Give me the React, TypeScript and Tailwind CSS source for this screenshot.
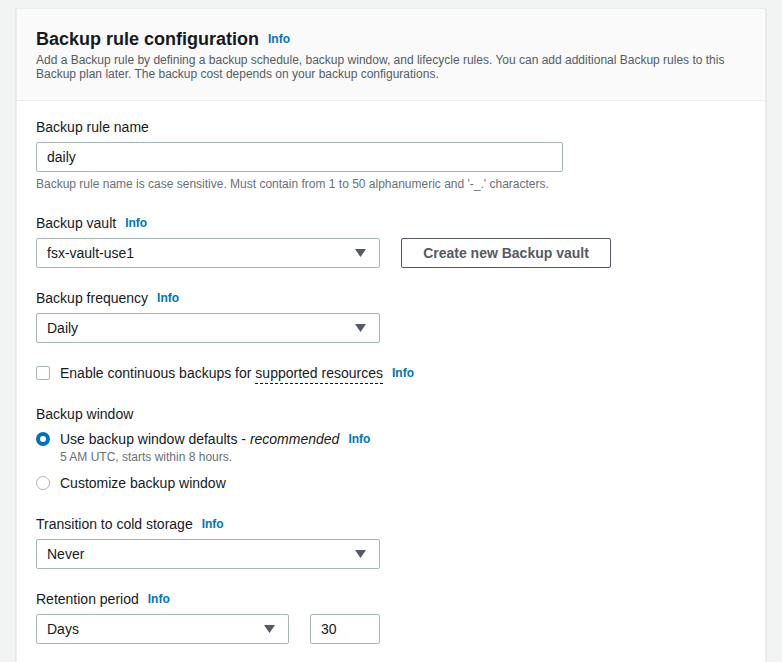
import React from 'react';

const Info = () => (
  <span className="ml-[9px] text-[12px] font-bold text-[#0073bb] leading-none">Info</span>
);

const Caret = () => (
  <svg width="11" height="8" viewBox="0 0 11 8" className="shrink-0">
    <polygon points="0,0 11,0 5.5,8" fill="#545b64" />
  </svg>
);

const Label = ({ text, info }: { text: string; info?: boolean }) => (
  <div className="flex items-center h-5 text-[14px] text-[#16191f] leading-5">
    <span>{text}</span>
    {info && <Info />}
  </div>
);

const Select = ({ value, width }: { value: string; width: string }) => (
  <div className={`${width} h-[30px] border border-[#aab7b8] rounded-[2px] bg-white flex items-center justify-between pl-[10px] pr-[13px]`}>
    <span className="text-[14px] text-[#16191f]">{value}</span>
    <Caret />
  </div>
);

export default function App() {
  return (
    <div className="min-h-screen bg-[#f2f3f3] pt-2 px-4" style={{ fontFamily: '"Liberation Sans", Arial, sans-serif' }}>
      <div className="bg-white border border-[#eaeded] shadow-[0_1px_1px_0_rgba(0,28,36,0.3)]">
        {/* header */}
        <div className="bg-[#fafafa] border-b border-[#eaeded] px-[19px] pt-[19px] pb-[19px]">
          <div className="flex items-center h-[22px]">
            <h2 className="text-[18px] font-bold text-[#16191f] leading-[22px]">Backup rule configuration</h2>
            <Info />
          </div>
          <p className="mt-[3px] text-[12px] leading-[14px] text-[#545b64]">
            Add a Backup rule by defining a backup schedule, backup window, and lifecycle rules. You can add additional Backup rules to this Backup plan later. The backup cost depends on your backup configurations.
          </p>
        </div>

        {/* body */}
        <div className="px-[19px] pt-[16px] pb-6 flex flex-col gap-5">
          <div>
            <Label text="Backup rule name" />
            <div className="mt-[5px] w-[527px] h-[30px] border border-[#aab7b8] rounded-[2px] flex items-center px-[10px] text-[14px] text-[#16191f]">
              daily
            </div>
            <p className="mt-[4px] mb-[1px] text-[12px] leading-4 text-[#687078]">
              Backup rule name is case sensitive. Must contain from 1 to 50 alphanumeric and '-_.' characters.
            </p>
          </div>

          <div>
            <Label text="Backup vault" info />
            <div className="mt-[5px] flex items-center gap-[21px]">
              <Select value="fsx-vault-use1" width="w-[344px]" />
              <button className="w-[210px] h-[30px] border border-[#545b64] rounded-[2px] bg-white text-[14px] font-bold text-[#545b64]">
                Create new Backup vault
              </button>
            </div>
          </div>

          <div>
            <Label text="Backup frequency" info />
            <div className="mt-[5px]">
              <Select value="Daily" width="w-[344px]" />
            </div>
          </div>

          <div className="flex items-center h-5">
            <span className="w-[14px] h-[14px] border border-[#aab7b8] rounded-[2px] bg-white" />
            <span className="ml-[10px] text-[14px] text-[#16191f]">
              Enable continuous backups for{' '}
              <span className="border-b border-dashed border-[#16191f] pb-[2px]">supported resources</span>
            </span>
            <Info />
          </div>

          <div className="mt-[1px]">
            <Label text="Backup window" />
            <div className="mt-[5px] flex items-start">
              <span className="mt-[3px] w-[14px] h-[14px] rounded-full border-[4px] border-[#0073bb] bg-white shrink-0" />
              <div className="ml-[10px]">
                <div className="flex items-center h-5 text-[14px] text-[#16191f]">
                  <span>Use backup window defaults - <i>recommended</i></span>
                  <Info />
                </div>
                <p className="text-[12px] leading-4 text-[#687078]">5 AM UTC, starts within 8 hours.</p>
              </div>
            </div>
            <div className="mt-[8px] flex items-center h-5">
              <span className="w-[14px] h-[14px] rounded-full border border-[#aab7b8] bg-white" />
              <span className="ml-[10px] text-[14px] text-[#16191f]">Customize backup window</span>
            </div>
          </div>

          <div className="mt-[1px]">
            <Label text="Transition to cold storage" info />
            <div className="mt-[5px]">
              <Select value="Never" width="w-[344px]" />
            </div>
          </div>

          <div>
            <Label text="Retention period" info />
            <div className="mt-[5px] flex items-center gap-[21px]">
              <Select value="Days" width="w-[253px]" />
              <div className="w-[70px] h-[30px] border border-[#aab7b8] rounded-[2px] flex items-center px-[10px] text-[14px] text-[#16191f]">
                30
              </div>
            </div>
          </div>
        </div>
      </div>
    </div>
  );
}
